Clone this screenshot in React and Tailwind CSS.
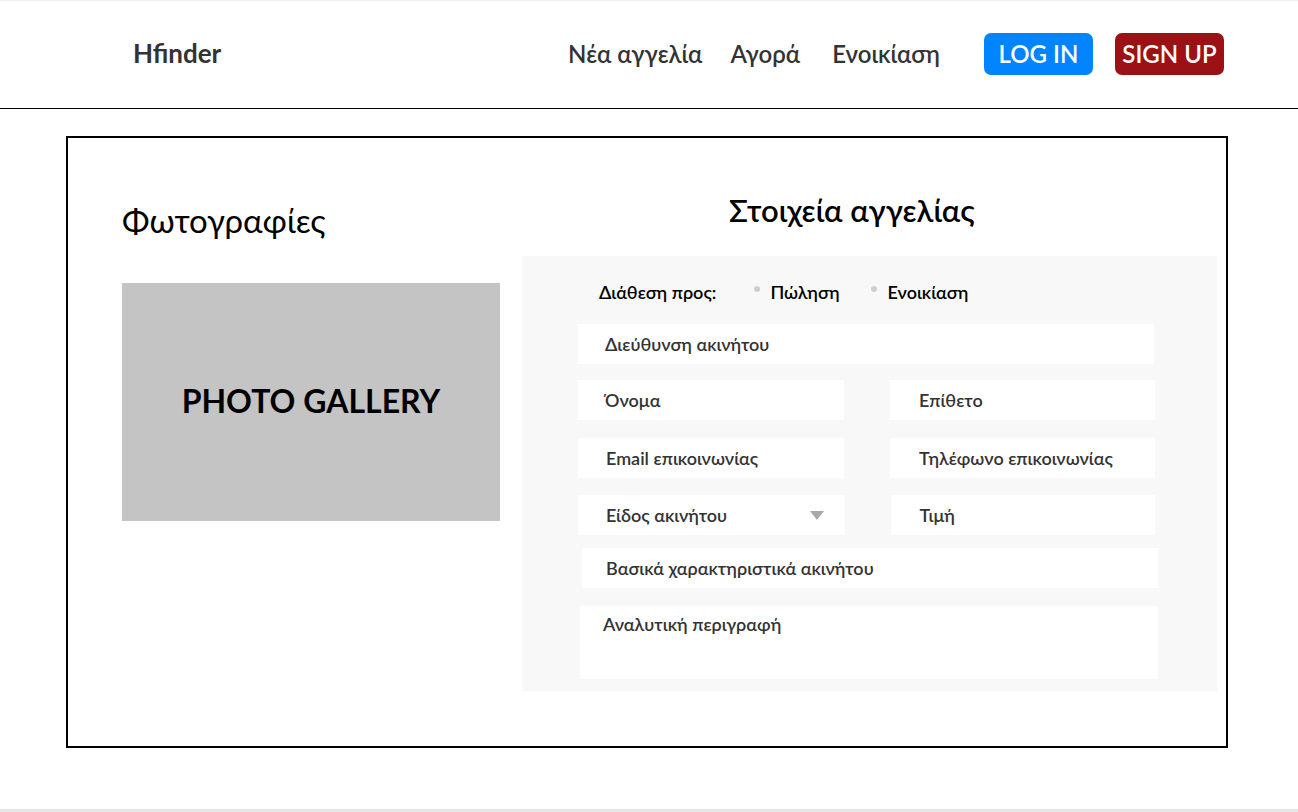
const font = { fontFamily: "Lato, 'Noto Sans', sans-serif" };

const inputText = "text-[18px] font-semibold text-[#333]";

function Field({ label, className = "", pl = "pl-[27px]", children }) {
  return (
    <div className={`flex items-center bg-white h-[40px] ${pl} ${className}`}>
      <span className={inputText}>{label}</span>
      {children}
    </div>
  );
}

function Radio({ label }) {
  return (
    <div className="flex items-center">
      <span className="w-[6px] h-[6px] rounded-full bg-[#cfcfcf] -mt-[6px] mr-[10px]" />
      <span className="text-[18px] font-semibold text-black">{label}</span>
    </div>
  );
}

export default function App() {
  return (
    <div className="w-[1298px] h-[812px] bg-white flex flex-col" style={font}>
      <header className="h-[109px] border-t border-[#eeeeee] border-b border-b-black flex items-center">
        <div className="ml-[133px] text-[26px] font-bold text-[#333] -mt-[2px]">Hfinder</div>
        <nav className="ml-auto flex items-center text-[24px] font-semibold text-[#333] -mt-[2px]">
          <a className="mr-[28px]">Νέα αγγελία</a>
          <a className="mr-[32px]">Αγορά</a>
          <a>Ενοικίαση</a>
        </nav>
        <button className="ml-[44px] w-[109px] h-[42px] rounded-[7px] bg-[#0084ff] text-white text-[24px] font-semibold -mt-[2px]">
          LOG IN
        </button>
        <button className="ml-[22px] mr-[74px] w-[109px] h-[42px] rounded-[7px] bg-[#9c1116] text-white text-[24px] font-semibold -mt-[2px]">
          SIGN UP
        </button>
      </header>

      <main className="mt-[27px] ml-[66px] w-[1162px] h-[612px] border-2 border-black flex">
        <section className="ml-[54px] w-[378px] flex flex-col">
          <h2 className="mt-[63px] text-[33px] leading-[38px] text-black">Φωτογραφίες</h2>
          <div className="mt-[44px] h-[238px] bg-[#c4c4c4] flex justify-center pt-[99px]">
            <span className="text-[32px] leading-[38px] font-bold text-black">PHOTO GALLERY</span>
          </div>
        </section>

        <section className="ml-[22px] w-[695px] flex flex-col">
          <h2 className="mt-[54px] text-[31px] leading-[37px] font-semibold text-black pl-[207px]">
            Στοιχεία αγγελίας
          </h2>
          <div className="mt-[27px] h-[435px] bg-[#f8f8f8] pl-[56px] pt-[24px]">
            <div className="flex items-center h-[24px] pl-[21px]">
              <span className="text-[18px] font-semibold text-black mr-[38px]">Διάθεση προς:</span>
              <div className="mr-[32px]">
                <Radio label="Πώληση" />
              </div>
              <Radio label="Ενοικίαση" />
            </div>

            <Field label="Διεύθυνση ακινήτου" className="mt-[20px] w-[576px]" />

            <div className="mt-[16px] flex gap-[46px] w-[577px]">
              <Field label="Όνομα" className="w-[266px]" />
              <Field label="Επίθετο" className="w-[265px]" pl="pl-[29px]" />
            </div>

            <div className="mt-[18px] flex gap-[46px] w-[577px]">
              <Field label="Email επικοινωνίας" className="w-[266px]" pl="pl-[28px]" />
              <Field label="Τηλέφωνο επικοινωνίας" className="w-[265px]" pl="pl-[29px]" />
            </div>

            <div className="mt-[17px] flex gap-[46px] w-[577px]">
              <Field label="Είδος ακινήτου" className="w-[267px]" pl="pl-[28px]">
                <svg className="ml-auto mr-[21px]" width="14" height="9" viewBox="0 0 14 9">
                  <path d="M0 0 H14 L7 9 Z" fill="#a9a9a9" />
                </svg>
              </Field>
              <Field label="Τιμή" className="w-[265px]" pl="pl-[29px]" />
            </div>

            <Field label="Βασικά χαρακτηριστικά ακινήτου" className="mt-[13px] ml-[4px] w-[576px]" pl="pl-[24px]" />

            <div className="mt-[18px] ml-[2px] w-[578px] h-[73px] bg-white pl-[23px] pt-[5px]">
              <span className={inputText}>Αναλυτική περιγραφή</span>
            </div>
          </div>
        </section>
      </main>

      <div className="mt-auto h-[3px] bg-[#e6e6e6]" />
    </div>
  );
}
